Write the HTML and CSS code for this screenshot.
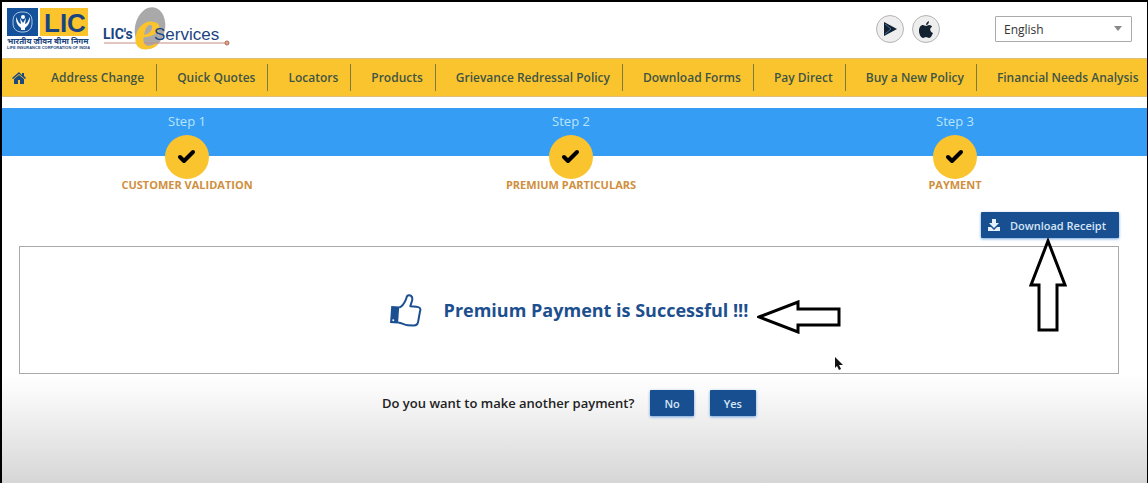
FILE: index.html
```html
<!DOCTYPE html>
<html lang="en">
  <head>
    <meta charset="utf-8" />
    <meta name="viewport" content="width=device-width, initial-scale=1" />
    <title>LIC's e-Services</title>
    <link rel="stylesheet" href="styles.css">
  </head>

  <body>
    <header class="header">
      <a class="logo" href="#" aria-label="LIC">
        <svg width="84" height="44" viewBox="0 0 84 44">
          <rect x="1" y="2" width="31" height="28" fill="#15509a" />
          <rect x="34" y="2" width="48" height="28" fill="#fbc42d" />
          <rect x="7" y="6" width="19" height="20" rx="8" fill="none" stroke="#a9c3e0" />
          <path d="M10 11c0 5 1 8 5 11v2h4v-2c4-3 5-6 5-11l-3 6-2 1 1-6-3 5-3-5 1 6-2-1z" fill="#fff" />
          <circle cx="17" cy="11" r="2" fill="#fff" />
          <text class="logo-lic" x="38" y="26">LIC</text>
          <text class="logo-hindi" x="1" y="38">भारतीय जीवन बीमा निगम</text>
          <text class="logo-small" x="1" y="43">LIFE INSURANCE CORPORATION OF INDIA</text>
        </svg>
      </a>
      <a class="logo" href="#" aria-label="LIC's eServices">
        <svg width="128" height="48" viewBox="0 0 128 48">
          <ellipse cx="47" cy="22" rx="15" ry="21" transform="rotate(12 47 22)" fill="#a9a9a9" />
          <path d="M1 37h123" stroke="#c98a80" />
          <text class="logo-e" x="31" y="43">e</text>
          <text class="logo-lics" x="0" y="33">LIC's</text>
          <text class="logo-services" x="51" y="34">Services</text>
          <circle cx="124" cy="37" r="2" fill="#e0a48e" stroke="#b06a50" />
        </svg>
      </a>

      <div class="tools">
        <a class="app" href="#" aria-label="Google Play">
          <svg width="14" height="14" viewBox="0 0 14 14">
            <path d="M1 0l13 7-13 7z" fill="#142130" />
            <path d="M2 2l6 5-6 5" fill="none" stroke="#3c73a8" />
          </svg>
        </a>
        <a class="app" href="#" aria-label="App Store">
          <svg width="14" height="17" viewBox="0 0 14 17">
            <path d="M7 4C7 2 8 1 10 0c0 2-1 4-3 4z" fill="#142130" />
            <path d="M7 5c1 0 2-1 3-1 2 0 3 1 3 2-3 1-2 5 1 6-1 2-2 5-4 5-1 0-2-1-3-1s-2 1-3 1c-2 0-4-4-4-7 0-4 2-6 4-6 1 0 2 1 3 1z" fill="#142130" />
          </svg>
        </a>
        <div class="lang">
          <select aria-label="Language">
            <option>English</option>
          </select>
          <svg class="lang-arrow" width="8" height="5" viewBox="0 0 8 5">
            <path d="M0 0h8l-4 5z" fill="#888" />
          </svg>
        </div>
      </div>
    </header>

    <nav class="nav">
      <a class="home" href="#" aria-label="Home">
        <svg width="14" height="12" viewBox="0 0 14 12">
          <path d="M7 0l3 3V1h2v3l2 2-1 1-6-5-6 5-1-1z" fill="#1b4a80" />
          <path d="M7 3l5 4v5H8V8H6v4H2V7z" fill="#1b4a80" />
        </svg>
      </a>
      <ul>
        <li><a href="#">Address Change</a></li>
        <li><a href="#">Quick Quotes</a></li>
        <li><a href="#">Locators</a></li>
        <li><a href="#">Products</a></li>
        <li><a href="#">Grievance Redressal Policy</a></li>
        <li><a href="#">Download Forms</a></li>
        <li><a href="#">Pay Direct</a></li>
        <li><a href="#">Buy a New Policy</a></li>
        <li><a href="#">Financial Needs Analysis</a></li>
      </ul>
    </nav>

    <ol class="steps">
      <li>
        <span class="step-num">Step 1</span>
        <span class="step-dot">
          <svg width="20" height="16" viewBox="0 0 20 16"><path d="M3 8l4 4 9-9" /></svg>
        </span>
        <span class="step-name">CUSTOMER VALIDATION</span>
      </li>
      <li>
        <span class="step-num">Step 2</span>
        <span class="step-dot">
          <svg width="20" height="16" viewBox="0 0 20 16"><path d="M3 8l4 4 9-9" /></svg>
        </span>
        <span class="step-name">PREMIUM PARTICULARS</span>
      </li>
      <li>
        <span class="step-num">Step 3</span>
        <span class="step-dot">
          <svg width="20" height="16" viewBox="0 0 20 16"><path d="M3 8l4 4 9-9" /></svg>
        </span>
        <span class="step-name">PAYMENT</span>
      </li>
    </ol>

    <main>
      <div class="actions">
        <button type="button" class="btn download">
          <svg width="12" height="12" viewBox="0 0 12 12">
            <path d="M4 0h4v4h3L6 9 1 4h3z" fill="#e6f0fb" />
            <path d="M0 8h3l3 3 3-3h3v4H0z" fill="#e6f0fb" />
          </svg>
          Download Receipt
        </button>
      </div>

      <section class="panel">
        <svg width="32" height="36" viewBox="0 0 32 36">
          <g transform="rotate(4 16 18)">
            <path d="M1 15h8v17H1z" fill="#1a4f91" />
            <circle cx="4" cy="29" r="1" fill="#fff" />
            <path d="M9 16c3-1 5-5 6-8 1-2 0-5 3-5 4 0 4 4 3 7l-1 4h6c4 0 5 2 4 5l-1 9c0 4-2 5-5 5h-5c-4 0-6-2-10-2" fill="none" stroke="#1a4f91" stroke-width="2" stroke-linejoin="round" />
          </g>
        </svg>
        <h1>Premium Payment is Successful !!!</h1>

        <svg class="arrow-left" width="84" height="34" viewBox="0 0 84 34">
          <path d="M2 17l39-15v7h41v16H41v7z" />
        </svg>
        <svg class="arrow-up" width="38" height="94" viewBox="0 0 38 94">
          <path d="M19 3l17 44h-8v45H10V47H2z" />
        </svg>
        <svg class="cursor" width="8" height="14" viewBox="0 0 8 14">
          <path d="M0 0v11l2-2 2 4 2-1-2-4h4z" fill="#111" />
        </svg>
      </section>
    </main>

    <footer class="again">
      <p>Do you want to make another payment?</p>
      <button type="button" class="btn">No</button>
      <button type="button" class="btn">Yes</button>
    </footer>
  </body>
</html>
```
FILE: styles.css
```css
* {
  box-sizing: border-box;
}

body {
  display: flex;
  flex-direction: column;
  min-height: 100vh;
  margin: 0;
  border: solid #000;
  border-width: 2px 1px 0 2px;
  overflow-x: hidden;
  background-color: #fff;
  font-family: "Open Sans", sans-serif;
  font-size: 12px;
}

ul,
ol {
  margin: 0;
  padding: 0;
  list-style: none;
}

a {
  color: inherit;
  text-decoration: none;
}

svg {
  display: block;
  flex: none;
}

/* Header */
.header {
  display: flex;
  align-items: flex-start;
  gap: 13px;
  height: 56px;
  padding: 4px 15px 0 4px;
}

.logo text {
  fill: #1a4480;
}

.logo .logo-lic {
  font: bold 26px "Liberation Sans", sans-serif;
}

.logo .logo-hindi {
  font: bold 8px "Noto Sans", sans-serif;
}

.logo .logo-small {
  font: bold 4px "Liberation Sans", sans-serif;
}

.logo .logo-lics {
  font: bold 14px Roboto, sans-serif;
}

.logo .logo-services {
  font: 17px "Liberation Sans", sans-serif;
}

.logo .logo-e {
  fill: #fbc42d;
  font: italic bold 60px "Liberation Serif", serif;
}

.tools {
  display: flex;
  align-items: center;
  gap: 8px;
  margin: 9px 0 0 auto;
}

.app {
  display: flex;
  align-items: center;
  justify-content: center;
  width: 28px;
  height: 28px;
  border: 1px solid #b4b4b4;
  border-radius: 50%;
  background-color: #eeeeef;
}

.lang {
  position: relative;
  margin-left: 47px;
}

.lang select {
  appearance: none;
  display: block;
  width: 137px;
  height: 26px;
  padding: 0 8px;
  border: 1px solid #aaa;
  border-radius: 1px;
  background-color: #fff;
  color: #333;
  font: 12px "Open Sans", sans-serif;
}

.lang-arrow {
  position: absolute;
  top: 10px;
  right: 10px;
  pointer-events: none;
}

/* Menu */
.nav {
  display: flex;
  align-items: center;
  height: 39px;
  padding-left: 10px;
  border: solid #dcc078;
  border-width: 1px 0;
  background-color: #fac42f;
  color: #3f5544;
  font-weight: 600;
  white-space: nowrap;
}

.nav ul {
  display: flex;
  flex: 1;
  margin-left: 5px;
}

.nav li {
  padding: 0 12px 0 20px;
  border-right: 1px solid #7d7b3c;
  line-height: 27px;
}

.nav li:last-child {
  border-right: 0;
}

/* Steps */
.steps {
  display: grid;
  grid-template-columns: repeat(3, 1fr);
  margin: 11px 0 0 -7px;
  background: linear-gradient(#369df4, #369df4) no-repeat 0 0 / 100% 48px;
}

.steps li {
  display: flex;
  flex-direction: column;
  align-items: center;
}

.step-num {
  height: 27px;
  color: #b9e4fa;
  font-size: 13px;
  line-height: 27px;
}

.step-dot {
  display: flex;
  align-items: center;
  justify-content: center;
  width: 44px;
  height: 44px;
  border-radius: 50%;
  background-color: #fac42f;
}

.step-dot path {
  fill: none;
  stroke: #000;
  stroke-width: 4;
  stroke-linecap: round;
  stroke-linejoin: round;
}

.step-name {
  color: #cf8f3e;
  font-size: 11px;
  font-weight: 700;
  line-height: 12px;
}

/* Content */
main {
  margin: 21px 28px 0 17px;
}

.actions {
  display: flex;
  justify-content: flex-end;
}

.btn {
  height: 26px;
  padding: 0 14px;
  border: 0;
  border-radius: 1px;
  background-color: #184f90;
  box-shadow: 0 1px 3px #6fa3dc;
  color: #d5e5f6;
  font: 600 11px "Open Sans", sans-serif;
}

.download {
  display: flex;
  align-items: center;
  gap: 10px;
  padding: 0 13px 0 7px;
}

.panel {
  position: relative;
  display: flex;
  align-items: center;
  justify-content: center;
  gap: 22px;
  height: 128px;
  margin-top: 8px;
  border: 1px solid #a9a9a9;
}

h1 {
  margin: 0;
  color: #1d4f8f;
  font-size: 18px;
  font-weight: 700;
}

/* Pointers drawn over the page */
.arrow-left,
.arrow-up {
  position: absolute;
  fill: #fff;
  stroke: #000;
  stroke-width: 3;
}

.arrow-left {
  top: 53px;
  left: calc(50% + 188px);
}

.arrow-up {
  top: -9px;
  right: 51px;
}

.cursor {
  position: absolute;
  top: 110px;
  left: calc(50% + 266px);
}

.again {
  display: flex;
  flex: 1;
  align-items: flex-start;
  justify-content: center;
  gap: 16px;
  padding: 16px 28px 0 17px;
  background: linear-gradient(#fff, #fafafa 16%, #d6d6d6);
}

.again p {
  margin: 0;
  color: #222;
  font-size: 13px;
  font-weight: 600;
  line-height: 26px;
}
```
